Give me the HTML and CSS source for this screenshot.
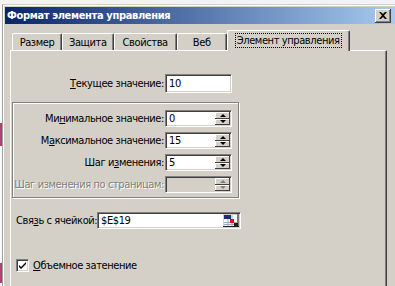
FILE: index.html
```html
<!DOCTYPE html>
<html lang="ru">
<head>
    <meta charset="UTF-8">
    <title>Формат элемента управления</title>
    <link rel="stylesheet" href="styles.css">
</head>
<body>
    <div class="screen">
        <div class="sheet"></div>
        <div class="dialog">
            <div class="titlebar">
                <span class="title">Формат элемента управления</span>
                <button class="close" type="button">
                    <svg width="8" height="7" viewBox="0 0 8 7"><path d="M0 0h2l2 2 2-2h2L5 3.5 8 7H6L4 5 2 7H0l3-3.5z" fill="#000"/></svg>
                </button>
            </div>
            <div class="dialog-body">
                <div class="tabs">
                    <div class="tab">Размер</div>
                    <div class="tab">Защита</div>
                    <div class="tab tab-wide">Свойства</div>
                    <div class="tab">Веб</div>
                    <div class="tab tab-active"><span class="focus">Элемент управления</span></div>
                </div>
                <div class="panel">
                    <div class="row row-current">
                        <span class="lbl"><u>Т</u>екущее значение:</span>
                        <div class="field field-current">10</div>
                    </div>

                    <div class="group">
                        <div class="row">
                            <span class="lbl">Ми<u>н</u>имальное значение:</span>
                            <div class="field">
                                <span class="val">0</span>
                                <span class="spin"><span class="spin-btn up"></span><span class="spin-btn down"></span></span>
                            </div>
                        </div>
                        <div class="row">
                            <span class="lbl">М<u>а</u>ксимальное значение:</span>
                            <div class="field">
                                <span class="val">15</span>
                                <span class="spin"><span class="spin-btn up"></span><span class="spin-btn down"></span></span>
                            </div>
                        </div>
                        <div class="row">
                            <span class="lbl">Шаг и<u>з</u>менения:</span>
                            <div class="field">
                                <span class="val">5</span>
                                <span class="spin"><span class="spin-btn up"></span><span class="spin-btn down"></span></span>
                            </div>
                        </div>
                        <div class="row disabled">
                            <span class="lbl">Шаг изменения по страницам:</span>
                            <div class="field">
                                <span class="val"></span>
                                <span class="spin"><span class="spin-btn up"></span><span class="spin-btn down"></span></span>
                            </div>
                        </div>
                    </div>

                    <div class="row row-link">
                        <span class="lbl">Свя<u>з</u>ь с ячейкой:</span>
                        <div class="field field-link">
                            <span class="val">$E$19</span>
                            <svg class="ref" width="16" height="13" viewBox="0 0 16 13">
                                <rect width="16" height="13" fill="#d4d0c8"/>
                                <rect x="1" y="1" width="13" height="11" fill="#fff"/>
                                <rect x="1" y="1" width="7" height="4" fill="#1c2f78"/>
                                <path d="M1 8.5h13M1 10.5h13M5 5v7M9 1v11" stroke="#9ab" stroke-width="1"/>
                                <rect x="7" y="5" width="4" height="4" fill="#e0101c"/>
                                <path d="M15 0v13M0 12.5h16" stroke="#202020" stroke-width="1"/>
                                <rect x="11" y="9" width="4" height="3" fill="#202020"/>
                            </svg>
                        </div>
                    </div>

                    <label class="check-row">
                        <span class="checkbox">
                            <svg width="9" height="9" viewBox="0 0 9 9"><path d="M1 4l2 2 5-5v2L3 8 1 6z" fill="#000"/></svg>
                        </span>
                        <span><u>О</u>бъемное затенение</span>
                    </label>
                </div>
            </div>
        </div>
    </div>
</body>
</html>
```

FILE: styles.css
```css
html, body {
    margin: 0;
}
body {
    width: 395px;
    height: 286px;
    overflow: hidden;
    font-family: "DejaVu Sans Condensed", "Liberation Sans", sans-serif;
    font-size: 11px;
    letter-spacing: -0.4px;
    color: #000;
    background: #f3f3f3;
}
.screen {
    display: flex;
    height: 286px;
    box-sizing: border-box;
    padding-top: 4px;
}
/* sliver of the worksheet behind the dialog */
.sheet {
    width: 2px;
    background: linear-gradient(#fafafa 0 119px, #b0406e 119px 142px, #fafafa 142px 259px, #b0406e 259px 279px, #fafafa 279px);
}
.dialog {
    flex: 1;
    display: flex;
    flex-direction: column;
    border-top: 1px solid #d4d0c8;
    border-left: 1px solid #a0a0a0;
    box-shadow: inset 1px 1px #fff;
    padding: 2px 0 0 2px;
    background: #d4d0c8;
}
.titlebar {
    display: flex;
    align-items: center;
    height: 17px;
    padding: 0 4px 0 2px;
    background: linear-gradient(to right, #0a246a, #a6caf0);
}
.title {
    color: #fff;
    font-weight: bold;
    font-size: 11px;
    letter-spacing: -0.35px;
}
.close {
    margin-left: auto;
    width: 16px;
    height: 14px;
    padding: 0;
    border: none;
    background: #d4d0c8;
    box-shadow: inset -1px -1px #404040, inset 1px 1px #fff, inset -2px -2px #808080;
    display: flex;
    align-items: center;
    justify-content: center;
}
.dialog-body {
    flex: 1;
    display: flex;
    flex-direction: column;
    padding: 6px 8px 0 5px;
}
.tabs {
    display: flex;
    align-items: flex-end;
    padding-left: 2px;
    position: relative;
    z-index: 1;
}
.tab {
    box-sizing: border-box;
    height: 17px;
    min-width: 50px;
    padding: 2px 6px 0;
    text-align: center;
    border-top: 1px solid #fff;
    border-left: 1px solid #fff;
    border-right: 1px solid #404040;
    border-radius: 2px 2px 0 0;
    box-shadow: inset -1px 0 #808080;
}
.tab-wide {
    padding: 2px 8px 0;
}
.tab-active {
    height: 21px;
    margin: 0 -2px -1px 0;
    padding: 3px 8px 0;
    background: #d4d0c8;
}
.focus {
    outline: 1px dotted #000;
    outline-offset: 0;
    padding: 0 1px;
}
.panel {
    flex: 1;
    padding-top: 23px;
    border-top: 1px solid #fff;
    border-left: 1px solid #fff;
    border-right: 1px solid #404040;
    box-shadow: inset -1px 0 #808080;
}
.row {
    display: flex;
    align-items: center;
    height: 17px;
}
.lbl {
    box-sizing: border-box;
    width: 152px;
    padding-right: 1px;
    text-align: right;
    white-space: nowrap;
}
.row-current {
    height: 19px;
}
.row-current .lbl {
    width: 154px;
}
.field {
    box-sizing: border-box;
    display: flex;
    align-items: center;
    width: 67px;
    height: 17px;
    padding: 1px 1px 1px 3px;
    background: #fff;
    border: 1px solid;
    border-color: #808080 #fff #fff #808080;
    box-shadow: inset 1px 1px #404040, inset -1px -1px #d4d0c8;
}
.field-current {
    height: 19px;
}
.spin {
    margin-left: auto;
    display: flex;
    flex-direction: column;
    width: 15px;
    height: 13px;
}
.spin-btn {
    flex: 1;
    display: flex;
    align-items: center;
    justify-content: center;
    background: #d4d0c8;
    box-shadow: inset -1px -1px #404040, inset 1px 1px #fff;
}
.spin-btn::after {
    content: "";
    border-left: 3px solid transparent;
    border-right: 3px solid transparent;
}
.up::after {
    border-bottom: 3px solid #000;
}
.down::after {
    border-top: 3px solid #000;
}
.group {
    box-sizing: border-box;
    width: 227px;
    margin: 9px 0 0 1px;
    padding: 7px 0 4px 0;
    display: flex;
    flex-direction: column;
    gap: 5px;
    border: 1px solid #808080;
    box-shadow: inset 1px 1px #fff, 1px 1px #fff;
}
.group .lbl {
    width: 152px;
}
.disabled .lbl {
    color: #808080;
    text-shadow: 1px 1px #fff;
}
.disabled .field {
    background: #d4d0c8;
}
.disabled .up::after {
    border-bottom-color: #808080;
}
.disabled .down::after {
    border-top-color: #808080;
}
.row-link {
    margin: 14px 0 0 5px;
}
.row-link .lbl {
    width: 81px;
    text-align: left;
    padding: 0;
}
.field-link {
    width: 144px;
}
.ref {
    margin-left: auto;
}
.check-row {
    display: flex;
    align-items: center;
    gap: 4px;
    margin: 30px 0 0 5px;
}
.checkbox {
    box-sizing: border-box;
    width: 13px;
    height: 13px;
    display: flex;
    align-items: center;
    justify-content: center;
    background: #fff;
    border: 1px solid;
    border-color: #808080 #fff #fff #808080;
    box-shadow: inset 1px 1px #404040, inset -1px -1px #d4d0c8;
}
```
